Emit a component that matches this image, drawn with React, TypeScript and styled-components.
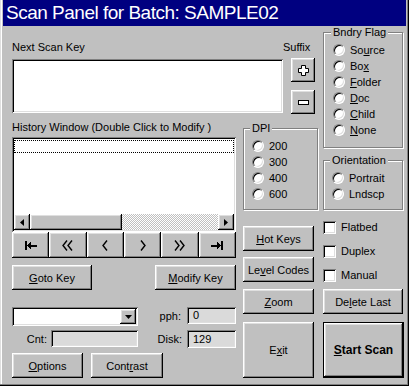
import styled, { createGlobalStyle, css } from "styled-components";

const GlobalStyle = createGlobalStyle`
  html, body {
    margin: 0;
    padding: 0;
    background: #c0c0c0;
  }
  body {
    font-family: "Liberation Sans", Arial, sans-serif;
    font-size: 11px;
    color: #000;
  }
`;

const raised = css`
  box-shadow: inset -1px -1px #000, inset 1px 1px #fff, inset -2px -2px #808080,
    inset 2px 2px #dfdfdf;
`;

const sunken = css`
  box-shadow: inset 1px 1px #808080, inset -1px -1px #fff, inset 2px 2px #000,
    inset -2px -2px #dfdfdf;
`;

const Window = styled.div`
  width: 409px;
  height: 386px;
  box-sizing: border-box;
  padding: 0 3px 3px 3px;
  background: #c0c0c0;
  box-shadow: inset -1px -1px #000, inset -2px -2px #808080, inset 1px 0 #dfdfdf,
    inset 2px 0 #fff;
`;

const TitleBar = styled.div`
  height: 26px;
  background: #000080;
  color: #fff;
  font-size: 19px;
  letter-spacing: -0.5px;
  line-height: 26px;
  padding-left: 3px;
  white-space: nowrap;
`;

const Body = styled.div`
  display: flex;
  gap: 7px;
  padding-left: 9px;
`;

const LeftArea = styled.div`
  width: 304px;
  display: flex;
  flex-direction: column;
`;

const TopRow = styled.div`
  height: 94px;
  display: flex;
`;

const KeyBlock = styled.div`
  width: 271px;
  padding-top: 15px;
`;

const Label = styled.div<{ $mt?: number }>`
  line-height: 13px;
  margin-top: ${(p) => p.$mt ?? 0}px;
  white-space: nowrap;
`;

const TextBox = styled.div`
  margin-top: 5px;
  height: 54px;
  width: 271px;
  background: #fff;
  ${sunken};
`;

const SuffixBlock = styled.div`
  padding-top: 15px;
  display: flex;
  flex-direction: column;
`;

const Btn = styled.button<{ $w?: number; $h?: number; $mt?: number; $big?: boolean }>`
  width: ${(p) => (p.$w ? `${p.$w}px` : "auto")};
  height: ${(p) => p.$h ?? 25}px;
  margin-top: ${(p) => p.$mt ?? 0}px;
  flex: ${(p) => (p.$w ? "none" : 1)};
  padding: 0;
  border: none;
  background: #c0c0c0;
  color: #000;
  font-family: "Liberation Sans", Arial, sans-serif;
  font-size: ${(p) => (p.$big ? 12 : 11)}px;
  font-weight: ${(p) => (p.$big ? 700 : 400)};
  display: flex;
  align-items: center;
  justify-content: center;
  ${raised};
  ${(p) =>
    p.$big &&
    css`
      box-shadow: inset 0 0 0 1px #000, inset -2px -2px #000, inset 2px 2px #fff,
        inset -3px -3px #808080, inset 3px 3px #dfdfdf;
    `}
`;

const SuffixBtn = styled(Btn)`
  margin-left: 8px;
`;

const LowerRow = styled.div`
  display: flex;
  gap: 7px;
`;

const LeftCol = styled.div`
  width: 225px;
  display: flex;
  flex-direction: column;
`;

const MidCol = styled.div`
  width: 75px;
  display: flex;
  flex-direction: column;
`;

const RightCol = styled.div`
  width: 81px;
  display: flex;
  flex-direction: column;
`;

const ListBox = styled.div`
  margin-top: 3px;
  width: 224px;
  height: 95px;
  box-sizing: border-box;
  padding: 2px;
  background: #fff;
  display: flex;
  flex-direction: column;
  ${sunken};
`;

const FocusRow = styled.div`
  margin-top: 1px;
  height: 13px;
  box-sizing: border-box;
  border: 1px dotted #000;
`;

const ListSpace = styled.div`
  flex: 1;
`;

const HScroll = styled.div`
  height: 16px;
  display: flex;
`;

const ScrollBtn = styled.div`
  width: 16px;
  height: 16px;
  background: #c0c0c0;
  display: flex;
  align-items: center;
  justify-content: center;
  ${raised};
`;

const Thumb = styled.div`
  width: 92px;
  background: #c0c0c0;
  ${raised};
`;

const Track = styled.div`
  flex: 1;
  background: repeating-conic-gradient(#c0c0c0 0% 25%, #fff 0% 50%) 0 0 / 2px 2px;
`;

const NavBar = styled.div`
  width: 224px;
  height: 26px;
  display: flex;
`;

const GotoRow = styled.div`
  width: 224px;
  margin-top: 7px;
  display: flex;
  justify-content: space-between;
`;

const FieldGrid = styled.div`
  margin-top: 17px;
  display: grid;
  grid-template-columns: 39px 87px 49px 49px;
  grid-template-rows: 19px 18px;
  row-gap: 4px;
`;

const Combo = styled.div`
  grid-column: 1 / 3;
  background: #fff;
  padding: 2px;
  display: flex;
  justify-content: flex-end;
  ${sunken};
`;

const ComboBtn = styled.div`
  width: 16px;
  height: 15px;
  background: #c0c0c0;
  display: flex;
  align-items: center;
  justify-content: center;
  ${raised};
`;

const FieldLabel = styled.div<{ $pr: number }>`
  text-align: right;
  padding-right: ${(p) => p.$pr}px;
  align-self: center;
  line-height: 13px;
`;

const Field = styled.div<{ $h: number }>`
  height: ${(p) => p.$h}px;
  background: #dadada;
  padding-left: 6px;
  line-height: ${(p) => p.$h}px;
  align-self: start;
  ${sunken};
`;

const ButtonRow = styled.div`
  margin-top: 5px;
  display: flex;
  gap: 8px;
`;

const Group = styled.div<{ $h: number; $mt: number; $w: number; $pl: number }>`
  height: ${(p) => p.$h}px;
  width: ${(p) => p.$w}px;
  margin-top: ${(p) => p.$mt}px;
  box-sizing: border-box;
  padding-left: ${(p) => p.$pl}px;
  border: 1px solid #808080;
  box-shadow: inset 1px 1px #fff, 1px 1px #fff;
`;

const Legend = styled.div`
  margin: -7px 0 0 -2px;
  padding: 0 2px;
  width: fit-content;
  background: #c0c0c0;
  line-height: 13px;
`;

const RadioList = styled.div`
  margin-top: 3px;
  display: flex;
  flex-direction: column;
`;

const RadioRow = styled.div`
  height: 16px;
  display: flex;
  align-items: center;
  gap: 5px;
  white-space: nowrap;
`;

const RadioDot = styled.span`
  width: 12px;
  height: 12px;
  box-sizing: border-box;
  border-radius: 50%;
  background: #fff;
  border: 1px solid;
  border-color: #808080 #fff #fff #808080;
  box-shadow: inset 1px 1px #000, inset -1px -1px #dfdfdf;
`;

const CheckList = styled.div`
  margin-top: 5px;
  display: flex;
  flex-direction: column;
`;

const CheckRow = styled.div`
  height: 24px;
  display: flex;
  align-items: center;
  gap: 5px;
`;

const CheckBox = styled.span`
  width: 13px;
  height: 13px;
  background: #fff;
  ${sunken};
`;

const Radio = ({ children }: { children: React.ReactNode }) => (
  <RadioRow>
    <RadioDot />
    <span>{children}</span>
  </RadioRow>
);

const Check = ({ label }: { label: string }) => (
  <CheckRow>
    <CheckBox />
    <span>{label}</span>
  </CheckRow>
);

const NavIcon = ({ kind }: { kind: string }) => {
  const line = { stroke: "#000", fill: "none", strokeWidth: 1.4 };
  switch (kind) {
    case "first":
      return (
        <svg width="12" height="9" viewBox="0 0 12 9" shapeRendering="crispEdges">
          <rect x="0" y="0" width="2" height="9" />
          <polygon points="2,4.5 6,0.5 6,8.5" />
          <rect x="6" y="3.5" width="6" height="2" />
        </svg>
      );
    case "pp":
      return (
        <svg width="11" height="11" viewBox="0 0 11 11">
          <polyline points="5,0.5 1,5.5 5,10.5" {...line} />
          <polyline points="10,0.5 6,5.5 10,10.5" {...line} />
        </svg>
      );
    case "p":
      return (
        <svg width="6" height="11" viewBox="0 0 6 11">
          <polyline points="5,0.5 1,5.5 5,10.5" {...line} />
        </svg>
      );
    case "n":
      return (
        <svg width="6" height="11" viewBox="0 0 6 11">
          <polyline points="1,0.5 5,5.5 1,10.5" {...line} />
        </svg>
      );
    case "nn":
      return (
        <svg width="11" height="11" viewBox="0 0 11 11">
          <polyline points="1,0.5 5,5.5 1,10.5" {...line} />
          <polyline points="6,0.5 10,5.5 6,10.5" {...line} />
        </svg>
      );
    default:
      return (
        <svg width="12" height="9" viewBox="0 0 12 9" shapeRendering="crispEdges">
          <rect x="0" y="3.5" width="6" height="2" />
          <polygon points="6,0.5 10,4.5 6,8.5" />
          <rect x="10" y="0" width="2" height="9" />
        </svg>
      );
  }
};

const Tri = ({ dir }: { dir: "l" | "r" | "d" }) => {
  if (dir === "d")
    return (
      <svg width="7" height="4" viewBox="0 0 7 4">
        <polygon points="0,0 7,0 3.5,4" />
      </svg>
    );
  return (
    <svg width="4" height="7" viewBox="0 0 4 7">
      <polygon points={dir === "l" ? "4,0 4,7 0,3.5" : "0,0 0,7 4,3.5"} />
    </svg>
  );
};

const navKeys = ["first", "pp", "p", "n", "nn", "last"];

const App = () => {
  return (
    <>
      <GlobalStyle />
      <Window>
        <TitleBar>Scan Panel for Batch: SAMPLE02</TitleBar>
        <Body>
          <LeftArea>
            <TopRow>
              <KeyBlock>
                <Label>Next Scan Key</Label>
                <TextBox />
              </KeyBlock>
              <SuffixBlock>
                <Label>Suffix</Label>
                <SuffixBtn $w={24} $h={24} $mt={4}>
                  <svg width="11" height="11" viewBox="0 0 11 11">
                    <path
                      d="M3.5 0.5h4v3h3v4h-3v3h-4v-3h-3v-4h3z"
                      fill="#fff"
                      stroke="#000"
                    />
                  </svg>
                </SuffixBtn>
                <SuffixBtn $w={24} $h={24} $mt={8}>
                  <svg width="11" height="5" viewBox="0 0 11 5">
                    <rect x="0.5" y="0.5" width="10" height="4" fill="#fff" stroke="#000" />
                  </svg>
                </SuffixBtn>
              </SuffixBlock>
            </TopRow>
            <LowerRow>
              <LeftCol>
                <Label $mt={1}>History Window (Double Click to Modify )</Label>
                <ListBox>
                  <FocusRow />
                  <ListSpace />
                  <HScroll>
                    <ScrollBtn>
                      <Tri dir="l" />
                    </ScrollBtn>
                    <Thumb />
                    <Track />
                    <ScrollBtn>
                      <Tri dir="r" />
                    </ScrollBtn>
                  </HScroll>
                </ListBox>
                <NavBar>
                  {navKeys.map((k) => (
                    <Btn key={k} $h={26}>
                      <NavIcon kind={k} />
                    </Btn>
                  ))}
                </NavBar>
                <GotoRow>
                  <Btn $w={80}>
                    <u>G</u>oto Key
                  </Btn>
                  <Btn $w={81}>
                    <u>M</u>odify Key
                  </Btn>
                </GotoRow>
                <FieldGrid>
                  <Combo>
                    <ComboBtn>
                      <Tri dir="d" />
                    </ComboBtn>
                  </Combo>
                  <FieldLabel $pr={6}>pph:</FieldLabel>
                  <Field $h={17}>0</Field>
                  <FieldLabel $pr={4}>Cnt:</FieldLabel>
                  <Field $h={17} />
                  <FieldLabel $pr={5}>Disk:</FieldLabel>
                  <Field $h={18}>129</Field>
                </FieldGrid>
                <ButtonRow>
                  <Btn $w={71}>
                    <u>O</u>ptions
                  </Btn>
                  <Btn $w={72}>
                    Cont<u>r</u>ast
                  </Btn>
                </ButtonRow>
              </LeftCol>
              <MidCol>
                <Group $h={82} $mt={8} $w={75} $pl={8}>
                  <Legend>DPI</Legend>
                  <RadioList>
                    <Radio>200</Radio>
                    <Radio>300</Radio>
                    <Radio>400</Radio>
                    <Radio>600</Radio>
                  </RadioList>
                </Group>
                <Btn $w={71} $mt={16}>
                  <u>H</u>ot Keys
                </Btn>
                <Btn $w={71} $mt={6}>
                  Le<u>v</u>el Codes
                </Btn>
                <Btn $w={71} $mt={7}>
                  <u>Z</u>oom
                </Btn>
                <Btn $w={71} $h={56} $mt={8}>
                  E<u>x</u>it
                </Btn>
              </MidCol>
            </LowerRow>
          </LeftArea>
          <RightCol>
            <Group $h={116} $mt={6} $w={80} $pl={9}>
              <Legend>Bndry Flag</Legend>
              <RadioList>
                <Radio>
                  So<u>u</u>rce
                </Radio>
                <Radio>
                  Bo<u>x</u>
                </Radio>
                <Radio>
                  <u>F</u>older
                </Radio>
                <Radio>
                  <u>D</u>oc
                </Radio>
                <Radio>
                  <u>C</u>hild
                </Radio>
                <Radio>
                  <u>N</u>one
                </Radio>
              </RadioList>
            </Group>
            <Group $h={50} $mt={12} $w={80} $pl={8}>
              <Legend>Orientation</Legend>
              <RadioList>
                <Radio>Portrait</Radio>
                <Radio>Lndscp</Radio>
              </RadioList>
            </Group>
            <CheckList>
              <Check label="Flatbed" />
              <Check label="Duplex" />
              <Check label="Manual" />
            </CheckList>
            <Btn $w={80} $mt={2}>
              De<u>l</u>ete Last
            </Btn>
            <Btn $w={81} $h={56} $mt={8} $big>
              <span>
                <u>S</u>tart Scan
              </span>
            </Btn>
          </RightCol>
        </Body>
      </Window>
    </>
  );
};

export default App;
